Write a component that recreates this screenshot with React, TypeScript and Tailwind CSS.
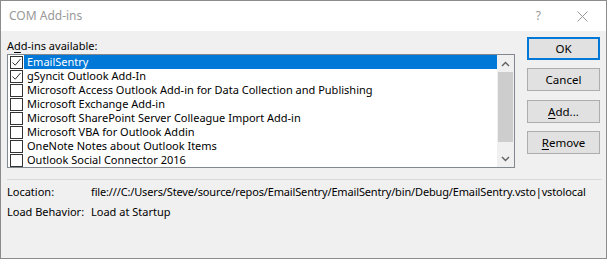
import React from 'react';

const addins = [
  { name: 'EmailSentry', checked: true },
  { name: 'gSyncit Outlook Add-In', checked: true },
  { name: 'Microsoft Access Outlook Add-in for Data Collection and Publishing', checked: false },
  { name: 'Microsoft Exchange Add-in', checked: false },
  { name: 'Microsoft SharePoint Server Colleague Import Add-in', checked: false },
  { name: 'Microsoft VBA for Outlook Addin', checked: false },
  { name: 'OneNote Notes about Outlook Items', checked: false },
  { name: 'Outlook Social Connector 2016', checked: false },
];

function Checkbox({ checked }: { checked: boolean }) {
  return (
    <div className="w-[13px] h-[13px] border border-[#333] bg-white flex items-center justify-center shrink-0">
      {checked && (
        <svg width="11" height="11" viewBox="0 0 11 11">
          <path d="M1.5 5.5 L4.2 8.2 L9.5 2" fill="none" stroke="#333" strokeWidth="1" />
        </svg>
      )}
    </div>
  );
}

function Button({ label, ul, primary }: { label: string; ul?: number; primary?: boolean }) {
  const text =
    ul === undefined ? (
      label
    ) : (
      <>
        {label.slice(0, ul)}
        <span className="underline underline-offset-2">{label[ul]}</span>
        {label.slice(ul + 1)}
      </>
    );
  return (
    <div
      className={`w-[73px] h-[23px] bg-[#e1e1e1] flex items-center justify-center text-[11.5px] text-black ${
        primary ? 'border-2 border-[#0078d7]' : 'border border-[#adadad]'
      }`}
    >
      {text}
    </div>
  );
}

export default function App() {
  return (
    <div
      className="w-[607px] h-[259px] border border-[#8c8c8c] flex flex-col overflow-hidden"
      style={{ fontFamily: '"Noto Sans", "Open Sans", sans-serif' }}
    >
      <div className="h-[30px] bg-white flex items-center pl-[8px] shrink-0">
        <span className="text-[12px] text-[#999]">COM Add-ins</span>
        <span className="ml-auto text-[12px] text-[#999] mr-[36px]">?</span>
        <svg width="11" height="11" viewBox="0 0 11 11" className="mr-[18px]">
          <path d="M0.5 0.5 L10.5 10.5 M10.5 0.5 L0.5 10.5" stroke="#999" strokeWidth="1" />
        </svg>
      </div>
      <div className="flex-1 bg-[#f0f0f0] px-[6px] pt-[6px] text-black text-[11px]">
        <div className="flex">
          <div className="w-[508px]">
            <div className="h-[17px] leading-[17px]">
              A<span className="underline underline-offset-2">d</span>d-ins available:
            </div>
            <div className="h-[114px] border border-[#828790] bg-white flex">
              <div className="flex-1">
                {addins.map((a, i) => (
                  <div key={a.name} className="h-[14px] flex items-center">
                    <div className="pl-[2px] pr-[1px] flex items-center">
                      <Checkbox checked={a.checked} />
                    </div>
                    <div
                      className={`flex-1 h-[14px] leading-[14px] pl-[3px] whitespace-nowrap ${
                        i === 0 ? 'bg-[#0078d7] text-white' : ''
                      }`}
                    >
                      {a.name}
                    </div>
                  </div>
                ))}
              </div>
              <div className="w-[17px] bg-[#f0f0f0] flex flex-col items-center">
                <div className="h-[17px] flex items-center justify-center">
                  <svg width="9" height="6" viewBox="0 0 9 6">
                    <path d="M1 5 L4.5 1.5 L8 5" fill="none" stroke="#606060" strokeWidth="1.4" />
                  </svg>
                </div>
                <div className="w-[15px] h-[70px] bg-[#cdcdcd]" />
                <div className="flex-1" />
                <div className="h-[17px] flex items-center justify-center">
                  <svg width="9" height="6" viewBox="0 0 9 6">
                    <path d="M1 1 L4.5 4.5 L8 1" fill="none" stroke="#606060" strokeWidth="1.4" />
                  </svg>
                </div>
              </div>
            </div>
          </div>
          <div className="ml-[12px] flex flex-col gap-[8px]">
            <Button label="OK" primary />
            <Button label="Cancel" />
            <div className="mt-[1px]">
              <Button label="Add..." ul={0} />
            </div>
            <Button label="Remove" ul={0} />
          </div>
        </div>
        <div className="mt-[11px] border-t border-[#d9d9d9] mr-[-2px]" />
        <div className="mt-[3px] flex h-[17px] leading-[17px]">
          <div className="w-[84px] shrink-0">Location:</div>
          <div className="whitespace-nowrap tracking-[-0.15px]">
            file:///C:/Users/Steve/source/repos/EmailSentry/EmailSentry/bin/Debug/EmailSentry.vsto|vstolocal
          </div>
        </div>
        <div className="mt-[3px] flex h-[17px] leading-[17px]">
          <div className="w-[84px] shrink-0">Load Behavior:</div>
          <div>Load at Startup</div>
        </div>
      </div>
    </div>
  );
}
